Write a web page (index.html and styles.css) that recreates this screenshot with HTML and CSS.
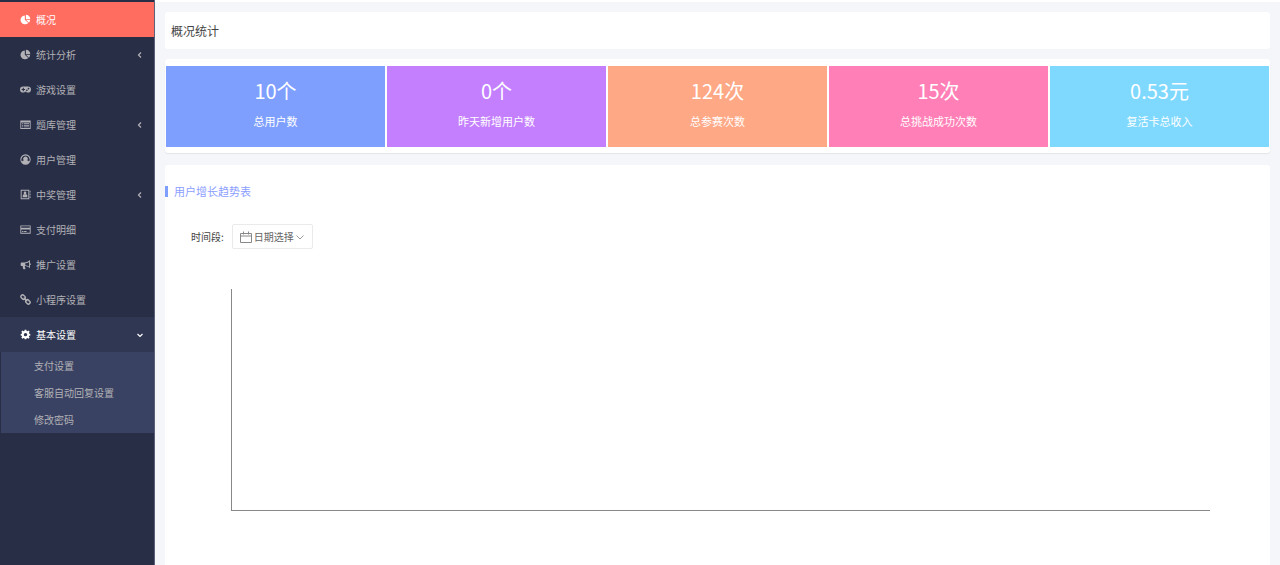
FILE: index.html
```html
<!DOCTYPE html>
<html lang="zh-CN">
<head>
  <meta charset="UTF-8" />
  <meta name="viewport" content="width=device-width, initial-scale=1.0" />
  <title>概况</title>
  <link rel="stylesheet" href="styles.css">
</head>
<body>
  <div class="layout">
    <nav class="sidebar">
      <ul class="menu">
        <li>
          <a class="menu-item active" href="#">
            <svg class="icon" viewBox="0 0 16 16"><path d="M7 2a6.500 6.500 0 1 0 5 11L7 8.500z"/><path d="M8.500 1v6.500H15A6.500 6.500 0 0 0 8.500 1z"/><path d="M9 8.800l4 3.800a6 6 0 0 0 1.700-3.800z"/></svg>
            <span>概况</span>
          </a>
        </li>
        <li>
          <button class="menu-item" type="button">
            <svg class="icon" viewBox="0 0 16 16"><path d="M7 2a6.500 6.500 0 1 0 5 11L7 8.500z"/><path d="M8.500 1v6.500H15A6.500 6.500 0 0 0 8.500 1z"/><path d="M9 8.800l4 3.800a6 6 0 0 0 1.700-3.800z"/></svg>
            <span>统计分析</span>
            <svg class="arrow" viewBox="0 0 8 8"><path d="M5 1.500L2.500 4 5 6.500"/></svg>
          </button>
        </li>
        <li>
          <a class="menu-item" href="#">
            <svg class="icon" viewBox="0 0 16 16"><path fill-rule="evenodd" d="M4.500 3.500h7a4.500 4.500 0 0 1 0 9c-1.300 0-2-.5-2.700-1.300H7.200c-.7.800-1.400 1.300-2.700 1.300a4.500 4.500 0 0 1 0-9zM4 5.500v1.700H2.300v1.600H4v1.700h1.600V8.800h1.700V7.200H5.600V5.500zM10.300 8a1.200 1.200 0 1 0 .1 2.300 1.200 1.200 0 0 0-.1-2.300zM12.700 5.600a1.200 1.200 0 1 0 .1 2.300 1.200 1.200 0 0 0-.1-2.300z"/></svg>
            <span>游戏设置</span>
          </a>
        </li>
        <li>
          <button class="menu-item" type="button">
            <svg class="icon" viewBox="0 0 16 16"><path fill-rule="evenodd" d="M.5 2h15v12.500H.5zM1.800 5v8.200h12.400V5z"/><path d="M3 6h1.500v1.300H3zM5.500 6h7.600v1.300H5.500zM3 8.400h1.500v1.300H3zM5.500 8.400h7.600v1.300H5.500zM3 10.800h1.500v1.300H3zM5.500 10.800h7.600v1.300H5.500z"/></svg>
            <span>题库管理</span>
            <svg class="arrow" viewBox="0 0 8 8"><path d="M5 1.500L2.500 4 5 6.500"/></svg>
          </button>
        </li>
        <li>
          <a class="menu-item" href="#">
            <svg class="icon" viewBox="0 0 16 16"><path fill-rule="evenodd" d="M8 .5a7.500 7.500 0 1 1 0 15 7.500 7.500 0 0 1 0-15zM8 2a6 6 0 0 0-5.200 9c.6-.9 1.500-1.300 2.700-1.500a3.400 3.400 0 1 1 5 0c1.200.2 2.100.6 2.700 1.500A6 6 0 0 0 8 2z"/></svg>
            <span>用户管理</span>
          </a>
        </li>
        <li>
          <button class="menu-item" type="button">
            <svg class="icon" viewBox="0 0 16 16"><path fill-rule="evenodd" d="M1 1h12.500v14H1zM2.400 2.400v11.200h9.700V2.400z"/><path d="M14 2.500h1.300V5H14zM14 6.500h1.300V9H14zM14 10.500h1.300V13H14z"/><circle cx="7.300" cy="5.800" r="2"/><path d="M4 12V9.800c0-1.200 1-2 2-2h2.600c1 0 2 .8 2 2V12z"/></svg>
            <span>中奖管理</span>
            <svg class="arrow" viewBox="0 0 8 8"><path d="M5 1.500L2.500 4 5 6.500"/></svg>
          </button>
        </li>
        <li>
          <a class="menu-item" href="#">
            <svg class="icon" viewBox="0 0 16 16"><path fill-rule="evenodd" d="M.5 2h15v12H.5zM1.800 3.300v2h12.400v-2zM1.800 8v4.700h12.400V8z"/><path d="M3 10.300h2v1.300H3zM6 10.300h3.500v1.300H6z"/></svg>
            <span>支付明细</span>
          </a>
        </li>
        <li>
          <a class="menu-item" href="#">
            <svg class="icon" viewBox="0 0 16 16"><path fill-rule="evenodd" d="M14.500 1.500v4.700a1.300 1.300 0 0 1 0 2.600v4.700c-2-1.800-4.400-3-7-3.200-.8.500-.7 1.300 0 1.900-.5.900.1 1.400 1 2.100-.8 1-3 .8-3.800.1-.4-1.300-1-2.500-.6-4.100H2.300C1.500 10.300 1 9.700 1 9V6.500C1 5.500 1.500 5 2.300 5H6.500c3 0 5.800-1.500 8-3.500zM13.200 4.200C11.500 5.400 9.600 6 7.700 6.200v2.900c2 .2 3.800.8 5.500 1.900z"/></svg>
            <span>推广设置</span>
          </a>
        </li>
        <li>
          <a class="menu-item" href="#">
            <svg class="icon icon-line" viewBox="0 0 16 16"><rect x="1" y="2" width="7" height="5" rx="2.500" transform="rotate(45 4.500 4.500)"/><rect x="8" y="9" width="7" height="5" rx="2.500" transform="rotate(45 11.500 11.500)"/><path d="M5.500 5.500l5 5"/></svg>
            <span>小程序设置</span>
          </a>
        </li>
        <li>
          <button class="menu-item open" type="button" aria-expanded="true">
            <svg class="icon" viewBox="0 0 16 16"><path fill-rule="evenodd" d="M6.800 1h2.400l.4 1.900 1.200.5 1.600-1.100 1.700 1.700L13 5.600l.5 1.200 1.500.3v2.300l-1.600.3-.5 1.200 1.100 1.600-1.700 1.700-1.600-1.100-1.200.5L9.200 15H6.800l-.4-1.400-1.200-.5-1.600 1.100-1.700-1.700L3 10.900l-.5-1.200L1 9.400V7.100l1.500-.3L3 5.600 1.900 4l1.700-1.700 1.600 1.100 1.200-.5zM8 5.700a2.500 2.500 0 1 0 .1 5 2.500 2.500 0 0 0-.1-5z"/></svg>
            <span>基本设置</span>
            <svg class="arrow" viewBox="0 0 8 8"><path d="M1.500 3L4 5.500 6.500 3"/></svg>
          </button>
          <ul class="submenu">
            <li><a href="#">支付设置</a></li>
            <li><a href="#">客服自动回复设置</a></li>
            <li><a href="#">修改密码</a></li>
          </ul>
        </li>
      </ul>
    </nav>

    <main class="main">
      <header class="card page-title">
        <h1>概况统计</h1>
      </header>

      <section class="card stats">
        <div class="stat blue">
          <strong>10个</strong>
          <span>总用户数</span>
        </div>
        <div class="stat purple">
          <strong>0个</strong>
          <span>昨天新增用户数</span>
        </div>
        <div class="stat orange">
          <strong>124次</strong>
          <span>总参赛次数</span>
        </div>
        <div class="stat pink">
          <strong>15次</strong>
          <span>总挑战成功次数</span>
        </div>
        <div class="stat cyan">
          <strong>0.53元</strong>
          <span>复活卡总收入</span>
        </div>
      </section>

      <section class="card trend">
        <h2>用户增长趋势表</h2>
        <div class="filter">
          <label for="dateRange">时间段:</label>
          <button class="date-picker" id="dateRange" type="button">
            <svg class="calendar" viewBox="0 0 12 12"><path d="M.5 2.500h11v9H.5zM.5 5h11M3.500.5v3M8.500.5v3"/></svg>
            <span>日期选择</span>
            <svg class="arrow-down" viewBox="0 0 8 8"><path d="M.5 2.500L4 6l3.500-3.500"/></svg>
          </button>
        </div>
        <div class="chart"></div>
      </section>
    </main>
  </div>
</body>
</html>
```

FILE: styles.css
```css
* {
  box-sizing: border-box;
}

body {
  margin: 0;
  background: #f4f6f9;
  color: #444;
  font-family: "Noto Sans CJK SC", sans-serif;
  font-size: 10px;
}

h1, h2, ul {
  margin: 0;
  padding: 0;
  font-weight: normal;
}

ul {
  list-style: none;
}

a {
  color: inherit;
  text-decoration: none;
}

button {
  margin: 0;
  border: 0;
  background: none;
  color: inherit;
  font: inherit;
  cursor: pointer;
}

.layout {
  display: flex;
  min-height: 100vh;
}

/* sidebar */
.sidebar {
  flex: 0 0 155px;
  padding-top: 2px;
  background: #292e47;
  border-right: 1px solid #5d6177;
  color: #b2b2b6;
}

.menu-item {
  display: flex;
  align-items: center;
  gap: 5px;
  width: 100%;
  height: 35px;
  padding: 0 10px 0 20px;
  text-align: left;
}

.menu-item.active {
  background: #ff6c60;
  color: #fff;
}

.menu-item.open {
  background: #303752;
  color: #fff;
}

.icon {
  width: 11px;
  height: 11px;
  fill: currentColor;
}

.icon-line {
  fill: none;
  stroke: currentColor;
  stroke-width: 2;
}

.arrow {
  width: 8px;
  height: 8px;
  margin-left: auto;
  fill: none;
  stroke: currentColor;
  stroke-width: 1.2;
}

.submenu {
  margin-left: 1px;
  background: #3a4263;
}

.submenu a {
  display: block;
  padding-left: 33px;
  line-height: 27px;
}

/* content */
.main {
  flex: 1;
  display: flex;
  flex-direction: column;
  padding: 10px 10px 0;
  border-top: 2px solid #fff;
}

.card {
  background: #fff;
  border-radius: 3px;
}

.page-title {
  margin-bottom: 10px;
  padding: 0 6px;
}

.page-title h1 {
  font-size: 12px;
  line-height: 37px;
}

.stats {
  display: grid;
  grid-template-columns: repeat(5, 1fr);
  gap: 2px;
  margin-bottom: 12px;
  padding: 7px 1px 6px;
  box-shadow: 0 1px 1px #e3e5e8;
}

.stat {
  display: flex;
  flex-direction: column;
  align-items: center;
  gap: 7px;
  padding: 10px 0 18px;
  color: #fff;
}

.stat strong {
  font-size: 20px;
  font-weight: normal;
  line-height: 30px;
}

.stat span {
  font-size: 11px;
  line-height: 16px;
}

.blue {
  background: #7f9fff;
}

.purple {
  background: #c47fff;
}

.orange {
  background: #ffa886;
}

.pink {
  background: #ff7fb6;
}

.cyan {
  background: #7fd9ff;
}

.trend {
  flex: 1;
  padding-top: 20px;
  border-radius: 3px 3px 0 0;
}

.trend h2 {
  display: flex;
  align-items: center;
  gap: 6px;
  color: #8c9eff;
  font-size: 11px;
  line-height: 12px;
}

.trend h2::before {
  content: "";
  width: 3px;
  height: 11px;
  background: #7f9fff;
}

.filter {
  display: flex;
  align-items: center;
  gap: 8px;
  margin: 27px 0 40px 26px;
}

.date-picker {
  display: flex;
  align-items: center;
  gap: 2px;
  height: 25px;
  padding: 0 8px 0 7px;
  border: 1px solid #eaeaea;
  border-radius: 2px;
  color: #666;
}

.calendar {
  width: 12px;
  height: 12px;
  fill: none;
  stroke: #888;
}

.arrow-down {
  width: 8px;
  height: 8px;
  fill: none;
  stroke: #999;
}

.chart {
  height: 222px;
  margin: 0 60px 54px 66px;
  border-left: 1px solid #888;
  border-bottom: 1px solid #888;
}
```
